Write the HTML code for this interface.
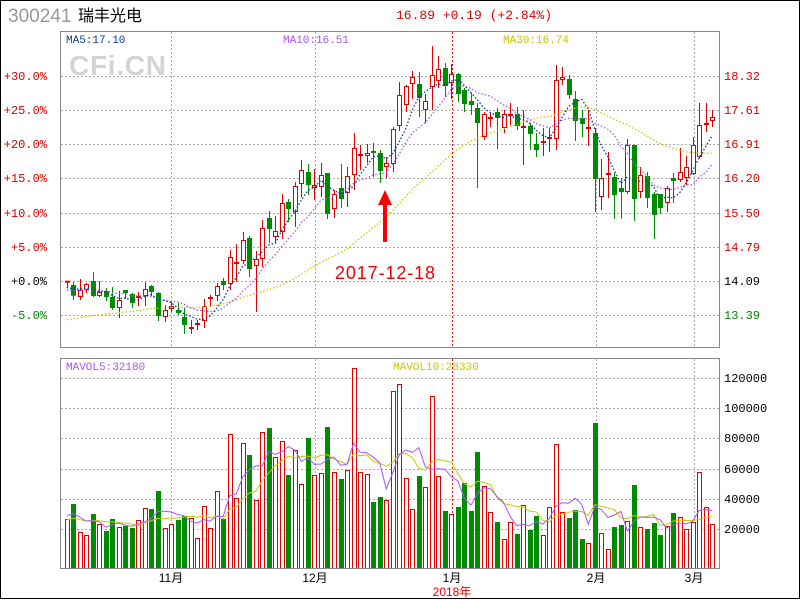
<!DOCTYPE html>
<html><head><meta charset="utf-8"><style>
html,body{margin:0;padding:0;background:#fff;}
#w{position:relative;width:798px;height:597px;border:1px solid #000;overflow:hidden;font-family:"Liberation Mono","Noto Sans CJK SC",monospace;}
svg{position:absolute;left:-1px;top:-1px;}
</style></head><body><div id="w">
<svg id="s" width="800" height="600" xmlns="http://www.w3.org/2000/svg" font-family="Liberation Mono, Noto Sans CJK SC, monospace">
<text x="8" y="22" font-family="Liberation Sans, sans-serif" font-size="19" fill="#999">300241</text>
<text x="78" y="21" font-family="Liberation Sans, Noto Sans CJK SC, sans-serif" font-size="16" fill="#000">瑞丰光电</text>
<text x="396" y="19" font-size="13" fill="#d00">16.89 +0.19 (+2.84%)</text>
<text x="69" y="75" font-family="Liberation Sans, sans-serif" font-weight="bold" font-size="28" fill="#d4d4d4" textLength="97">CFi.CN</text>
<g id="grid"></g>
<g id="lab" font-size="12"></g>
<g id="c"></g>
<rect x="60.5" y="31.5" width="659" height="316" fill="none" stroke="#888"/>
<rect x="60.5" y="358.5" width="659" height="210" fill="none" stroke="#888"/>
<text x="66" y="43" font-size="11" fill="#0a3c8c">MA5:17.10</text>
<text x="283" y="43" font-size="11" fill="#a855f7">MA10:16.51</text>
<text x="503" y="43" font-size="11" fill="#c8c800">MA30:16.74</text>
<text x="66" y="370" font-size="11" fill="#a855f7">MAVOL5:32180</text>
<text x="393" y="370" font-size="11" fill="#c8c800">MAVOL10:28330</text>
<polygon points="385,190 378,205 383,205 383,242 387,242 387,205 392,205" fill="#f00"/>
<text x="335" y="279" font-family="Liberation Sans, sans-serif" font-size="18" fill="#e00" textLength="100">2017-12-18</text>
<text x="452" y="596" font-family="Liberation Sans, Noto Sans CJK SC, sans-serif" font-size="12" fill="#e00" text-anchor="middle">2018年</text>
</svg></div>
<script>
var D=[["r",281.7,281.7,281.7,286.7],["g",285,295.7,282,300],["r",290,297,279,300],["r",284,290,283,293],["g",281,296,272,297],["r",292,296,281,297],["g",291,297,288,301],["g",297,308,287,310],["r",300,308,291,318],["g",290,293,290,299],["g",294,303,293,308],["r",296,298,292,306],["r",289,296,282,306],["g",286,292,285,296],["g",293,316,292,321],["r",310,317,305,322],["r",306,309,302,312],["g",310,313,303,315],["g",317,325,308,334],["r",328,328,320,334],["r",324,325,320,330],["r",306,321,299,328],["r",297,299,295,307],["r",286,296,283,301],["g",281,285,278,290],["r",257,284,250,290],["r",263,263,244,282],["r",240,261,232,264],["g",238,269,236,277],["r",259,266,251,312],["r",228,259,220,267],["g",218,229,211,243],["r",231,237,216,243],["r",203,232,194,239],["g",202,209,199,222],["r",186,212,182,227],["r",170,184,160,197],["g",172,185,164,195],["r",185,188,169,200],["r",175,187,163,197],["g",173,214,173,219],["r",194,209,190,218],["g",188,199,164,208],["r",176,193,167,207],["r",148,175,133,190],["r",155,155,145,170],["r",153,156,144,163],["g",152,152,143,177],["g",153,171,150,183],["r",163,167,157,178],["r",129,164,127,172],["r",95,126,82,131],["r",86,105,85,112],["r",77,84,71,99],["g",84,98,72,117],["r",101,110,94,123],["r",75,87,46,110],["r",69,81,56,88],["g",68,86,63,97],["r",74,83,64,99],["g",74,94,73,102],["g",90,104,88,112],["g",101,105,93,115],["g",108,123,103,188],["r",114,137,112,140],["r",118,119,113,127],["g",112,118,108,149],["r",114,128,110,133],["r",115,115,103,125],["g",114,126,107,130],["r",126,128,110,165],["g",126,134,123,150],["g",144,150,133,157],["r",141,143,128,156],["r",138,139,128,152],["r",80,139,65,150],["r",77,80,67,85],["g",79,95,75,99],["g",99,121,91,141],["g",118,124,110,137],["r",128,128,110,146],["g",133,179,128,212],["r",178,197,159,210],["r",174,174,152,198],["g",177,195,173,219],["g",188,192,178,219],["r",145,192,139,194],["g",145,199,145,221],["r",175,192,167,198],["g",176,198,172,208],["g",194,215,192,239],["g",194,208,194,214],["r",188,203,186,212],["g",178,181,173,203],["r",172,180,148,182],["r",167,178,156,185],["r",145,174,137,175],["r",125,157,103,158],["r",124,124,103,132],["r",117,121,110,127]];
var V=[519,504,532,535,514,524,531,519,527,526,528,520,508,509,491,528,524,520,516,518,538,506,528,491,519,434,498,443,455,500,432,428,457,441,475,450,484,438,475,473,427,472,479,470,368,472,474,502,497,500,391,384,478,509,476,487,396,476,511,514,507,483,511,452,486,512,522,539,522,534,505,530,516,535,507,444,512,518,510,539,543,423,533,549,527,525,521,485,527,529,523,535,526,513,517,529,522,472,507,524];
var R="#e00000",G="#008c00",h="";
function X(i){return 66.7+6.52*i;}
var g="";
[76,110,144,178,213,247,281,315].forEach(function(y){g+='<line x1="61" x2="719" y1="'+(y+.5)+'" y2="'+(y+.5)+'" stroke="#aaa" stroke-dasharray="2,2"/>';});
[378,408,438,469,499,529].forEach(function(y){g+='<line x1="61" x2="719" y1="'+(y+.5)+'" y2="'+(y+.5)+'" stroke="#aaa" stroke-dasharray="2,2"/>';});
[171,315,596,694].forEach(function(x){g+='<line x1="'+(x+.5)+'" x2="'+(x+.5)+'" y1="32" y2="347" stroke="#aaa" stroke-dasharray="2,2"/><line x1="'+(x+.5)+'" x2="'+(x+.5)+'" y1="359" y2="568" stroke="#aaa" stroke-dasharray="2,2"/>';});
g+='<line x1="452.5" x2="452.5" y1="32" y2="347" stroke="#f00" stroke-dasharray="2,2"/><line x1="452.5" x2="452.5" y1="359" y2="568" stroke="#f00" stroke-dasharray="2,2"/>';
document.getElementById("grid").innerHTML=g;
var l="",L=["+30.0%","+25.0%","+20.0%","+15.0%","+10.0%","+5.0%","+0.0%","-5.0%"],P=["18.32","17.61","16.91","16.20","15.50","14.79","14.09","13.39"],Y=[76,110,144,178,213,247,281,315];
for(var k=0;k<8;k++){var col=k<6?"#d00":(k==6?"#000":"#080");l+='<text x="47" y="'+(Y[k]+4)+'" text-anchor="end" fill="'+col+'">'+L[k]+'</text><text x="724" y="'+(Y[k]+4)+'" fill="'+col+'">'+P[k]+'</text>';}
[["120000",378],["100000",408],["80000",438],["60000",469],["40000",499],["20000",529]].forEach(function(a){l+='<text x="724" y="'+(a[1]+4)+'" fill="#000">'+a[0]+'</text>';});
[["11月",171],["12月",315],["1月",452],["2月",596],["3月",694]].forEach(function(a){l+='<text x="'+a[1]+'" y="582" text-anchor="middle" fill="#000" font-family="Liberation Sans, Noto Sans CJK SC, sans-serif">'+a[0]+'</text>';});
document.getElementById("lab").innerHTML=l;
var C=[];
D.forEach(function(d,i){var x=Math.round(X(i)),c=d[0]=="r"?R:G,t=d[1],b=d[2];
C.push(d[0]=="r"?t:b);
h+='<line x1="'+(x+.5)+'" x2="'+(x+.5)+'" y1="'+d[3]+'" y2="'+d[4]+'" stroke="'+c+'"/>';
if(b-t<1.5){h+='<rect x="'+(x-2)+'" y="'+(t-1)+'" width="5" height="2" fill="'+c+'"/>';}
else if(d[0]=="r"){h+='<rect x="'+(x-1.5)+'" y="'+(t+.5)+'" width="4" height="'+(b-t-1)+'" fill="#fff" stroke="'+c+'"/>';}
else{h+='<rect x="'+(x-2)+'" y="'+t+'" width="5" height="'+(b-t)+'" fill="'+c+'"/>';}
var v=V[i];
if(d[0]=="r")h+='<rect x="'+(x-1.5)+'" y="'+(v+.5)+'" width="4" height="'+(568-v)+'" fill="#fff" stroke="'+c+'"/>';
else h+='<rect x="'+(x-2)+'" y="'+v+'" width="5" height="'+(569-v)+'" fill="'+c+'"/>';
});
function ma(arr,n,pad){var o=[];for(var i=0;i<arr.length;i++){var s=0;for(var j=i-n+1;j<=i;j++)s+=j<0?pad:arr[j];o.push(s/n);}return o;}
function pl(a,c,dash){var p="";for(var i=0;i<a.length;i++)p+=X(i).toFixed(1)+","+a[i].toFixed(1)+" ";return '<polyline points="'+p+'" fill="none" stroke="'+c+'" stroke-width="'+(dash?1.3:1)+'"'+(dash?' stroke-dasharray="1.5,2"':'')+'/>';}
h+=pl(ma(C,30,321),"#c8c800",1)+pl(ma(C,10,291),"#a855f7",1)+pl(ma(C,5,289),"#0a3c8c",1);
h+=pl(ma(V,10,520),"#c8c800",0)+pl(ma(V,5,515),"#a855f7",0);
document.getElementById("c").innerHTML=h;
</script></body></html>
